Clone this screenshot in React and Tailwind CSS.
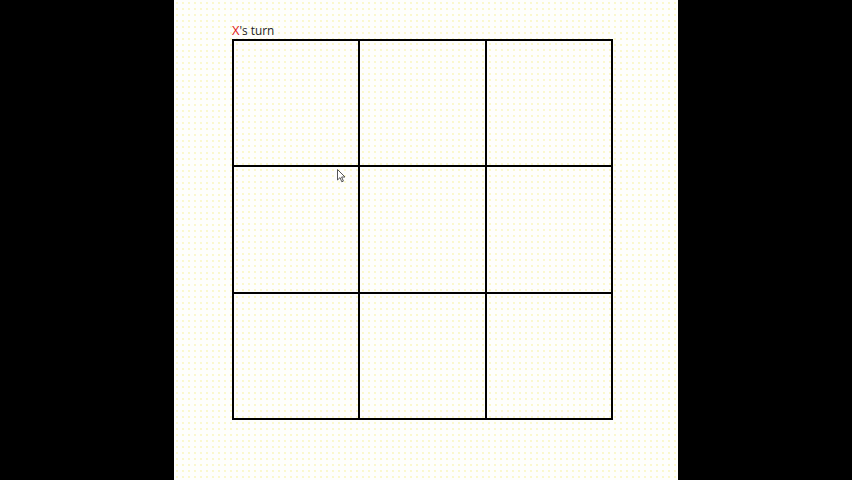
import React from "react";

const Board = () => {
  const cells = [...Array(9)];
  return (
    <div className="grid grid-cols-3 gap-[2px] p-[2px] bg-black w-[381px] h-[381px]">
      {cells.map((_, i) => (
        <div
          key={i}
          className="bg-[#fefefc] bg-[radial-gradient(circle,#f8f4b4_0.6px,transparent_0.9px)] bg-[length:6px_6px]"
        />
      ))}
    </div>
  );
};

export default function App() {
  return (
    <div className="w-[852px] h-[480px] bg-black flex justify-center overflow-hidden">
      <div className="relative w-[504px] h-full bg-[#fefefc] bg-[radial-gradient(circle,#f8f4b4_0.6px,transparent_0.9px)] bg-[length:6px_6px] pt-[22px] pl-[58px] font-['Open_Sans',sans-serif]">
        <p className="text-[11.8px] leading-[17px] text-[#222]">
          <span className="text-[#e01818] text-[13px]">X</span>'s turn
        </p>
        <Board />
        {/* mouse pointer */}
        <svg className="absolute left-[163px] top-[169px]" width="9" height="14" viewBox="0 0 9 14">
          <path d="M0.5 0.5 L0.5 11 L3 8.6 L4.8 12.8 L6.4 12.1 L4.6 8 L8 8 Z" fill="#fff" stroke="#555" strokeWidth="1" />
        </svg>
      </div>
    </div>
  );
}
